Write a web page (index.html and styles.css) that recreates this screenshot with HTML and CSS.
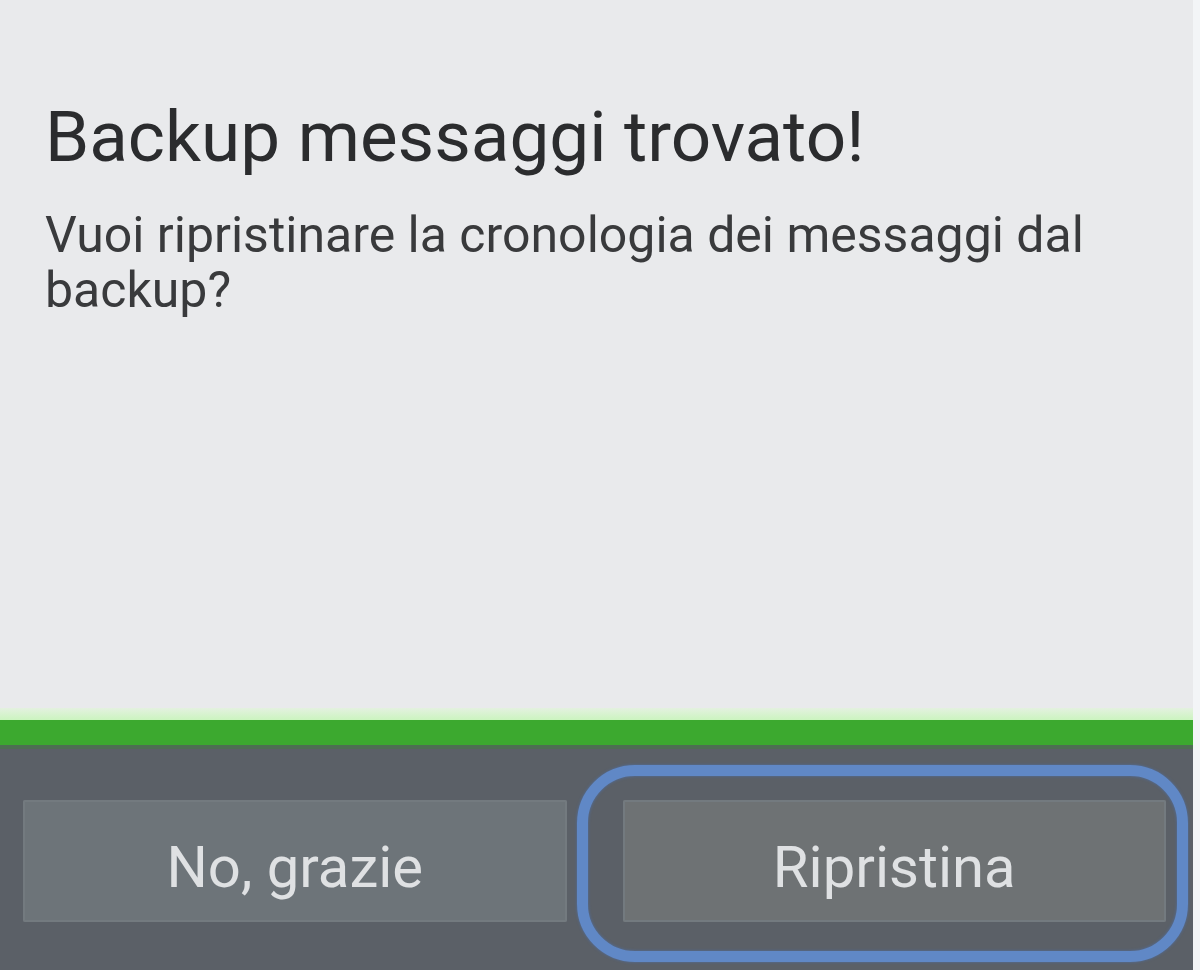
FILE: index.html
```html
<!DOCTYPE html>
<html lang="it">
<head>
    <meta charset="UTF-8">
    <meta name="viewport" content="width=device-width, initial-scale=1.0">
    <title>Backup messaggi</title>
    <link rel="stylesheet" href="styles.css">
</head>
<body>
    <div class="screen">
        <div class="dialog">
            <h1 class="dialog-title">Backup messaggi trovato!</h1>
            <p class="dialog-text">Vuoi ripristinare la cronologia dei messaggi dal backup?</p>
        </div>

        <div class="divider-glow"></div>
        <div class="divider-bar"></div>

        <div class="actions">
            <button class="action-btn">No, grazie</button>
            <button class="action-btn primary">
                Ripristina
                <span class="focus-ring"></span>
            </button>
        </div>
    </div>
</body>
</html>
```

FILE: styles.css
```css
body {
    margin: 0;
    padding: 0;
    font-family: Roboto, 'Noto Sans', sans-serif;
    background: #e9eaec;
}
.screen {
    width: 1193px;
    height: 970px;
    display: flex;
    flex-direction: column;
    border-right: 7px solid #f3f5f7;
}
.dialog {
    flex: 1;
    background: #e9eaec;
    padding: 97px 40px 0 45px;
}
.dialog-title {
    margin: 0;
    font-size: 71px;
    line-height: 80px;
    font-weight: 400;
    color: #2b2c2e;
}
.dialog-text {
    margin: 31px 0 0;
    font-size: 50px;
    line-height: 55px;
    color: #393a3c;
}
.divider-glow {
    height: 12px;
    background: linear-gradient(#e4f1e0, #cbf4bf);
}
.divider-bar {
    height: 25px;
    background: #3ca92f;
    border-bottom: 4px solid #4d6f52;
}
.actions {
    height: 221px;
    box-sizing: border-box;
    background: #5b6067;
    padding: 51px 27px 0 23px;
    display: flex;
    gap: 56px;
    align-items: flex-start;
}
.action-btn {
    position: relative;
    flex: 1;
    height: 122px;
    padding: 12px 0 0;
    border: none;
    border-radius: 2px;
    background: #6d7479;
    color: #dfe1e3;
    font-family: Roboto, 'Noto Sans', sans-serif;
    font-size: 58px;
    line-height: 58px;
    box-shadow: inset 0 0 0 2px #737a7f;
}
.action-btn.primary {
    background: #6e7274;
}
/* highlight drawn round the restore button */
.focus-ring {
    position: absolute;
    left: -46px;
    top: -35px;
    right: -22px;
    bottom: -40px;
    border: 11px solid #6088c6;
    border-radius: 58px;
    box-shadow: 0 0 3px #4d6fa8, inset 0 0 3px #4d6fa8;
}
```
